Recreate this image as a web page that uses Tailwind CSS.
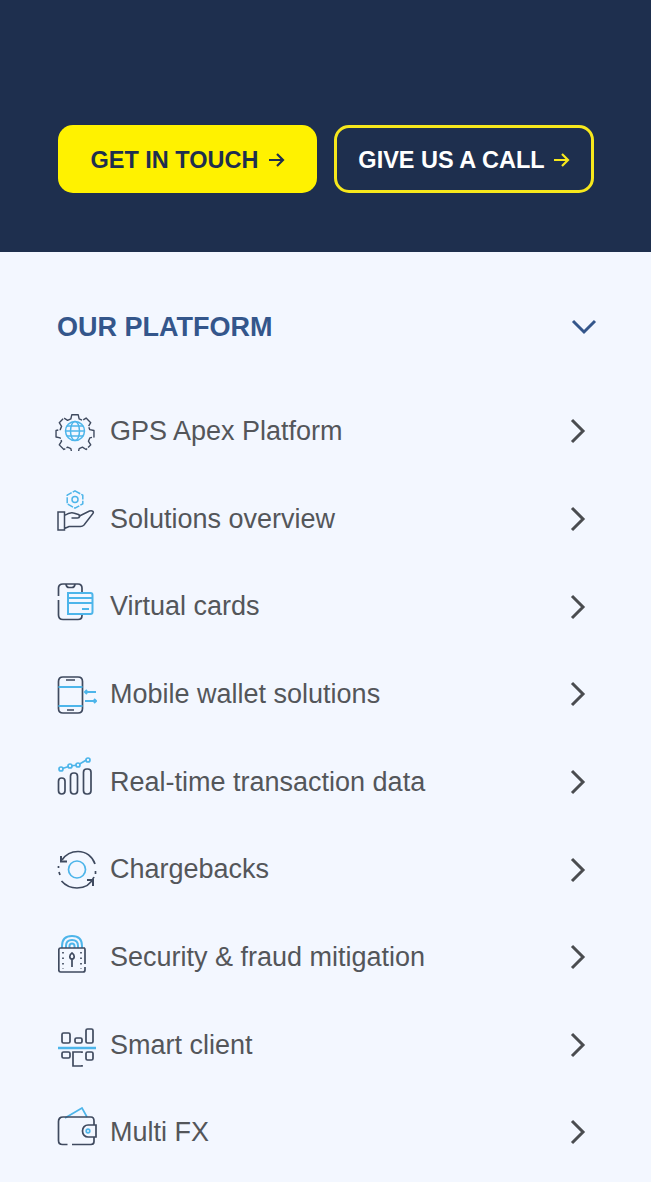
<!DOCTYPE html>
<html><head><meta charset="utf-8"><script src="https://cdn.jsdelivr.net/npm/@tailwindcss/browser@4"></script></head>
<body class="m-0 bg-[#f3f7ff] font-['Liberation_Sans',Arial,sans-serif] overflow-hidden">
<div class="w-[651px] h-[1182px] overflow-hidden">
<header class="h-[252px] bg-[#1e2f4e] pt-[125px] pl-[58px] flex gap-[17px] items-start">
  <a class="w-[259px] h-[68px] rounded-[15px] bg-[#fff200] flex items-center justify-center gap-[9px] text-[#1e2f4e] text-[23.5px] font-bold"><span class="pt-[4px]">GET IN TOUCH</span>
    <svg class="w-[17px] h-[16px] mt-[2px]" viewBox="0 0 17 16" fill="none" stroke="currentColor" stroke-width="2.2"><path d="M1 8h14M9 2l6 6-6 6"/></svg></a>
  <a class="w-[260px] h-[68px] rounded-[15px] border-[3px] border-[#f7e81c] flex items-center justify-center gap-[8px] text-white text-[23.5px] font-bold"><span class="pt-[4px]">GIVE US A CALL</span>
    <svg class="w-[17px] h-[16px] mt-[2px] text-[#f7e81c]" viewBox="0 0 17 16" fill="none" stroke="currentColor" stroke-width="2.2"><path d="M1 8h14M9 2l6 6-6 6"/></svg></a>
</header>
<main class="pl-[57px] pr-[54px]">
  <div class="h-[150px] pt-[56px] flex justify-between items-start">
    <h2 class="h-[38px] leading-[38px] text-[#34568b] text-[27px] font-bold">OUR PLATFORM</h2>
    <svg class="w-[26px] h-[16px] mt-[11px]" viewBox="0 0 26 16" fill="none" stroke="#34568b" stroke-width="3"><path d="M2 2l11 11L24 2"/></svg>
  </div>
  <ul class="text-[#54565a] text-[27px] -mt-[14.5px]">
    <li class="h-[87.65px] flex items-center">
      <svg class="w-[40px] h-[40px] shrink-0 -ml-[2px] mr-[15px]" viewBox="0 0 40 40" fill="none" stroke-width="1.5"><path stroke="#3f4a5f" stroke-dasharray="15 1.500" d="M16.500 2.500h7l1 4.500 3.500 1.500 4-2.500 5 5-2.500 4 1.500 3.500 4.500 1v7l-4.500 1-1.500 3.500 2.500 4-5 5-4-2.500-3.500 1.500-1 4.500h-7l-1-4.500-3.500-1.500-4 2.500-5-5 2.500-4-1.500-3.500-4.500-1v-7l4.500-1 1.500-3.500-2.500-4 5-5 4 2.500 3.500-1.500z" stroke-linejoin="round" transform="translate(1.500 1.500) scale(.925)"/><circle cx="20" cy="20" r="9.500" stroke="#4db5ea"/><ellipse cx="20" cy="20" rx="4.500" ry="9.500" stroke="#4db5ea"/><path stroke="#4db5ea" d="M10 20h20M11.500 15h17M11.500 25h17"/></svg>
      <span class="grow">GPS Apex Platform</span>
      <svg class="w-[16px] h-[26px] mr-[11px]" viewBox="0 0 16 26" fill="none" stroke="#4a4c50" stroke-width="3"><path d="M2 2l11 11L2 24"/></svg>
    </li>
    <li class="h-[87.65px] flex items-center">
      <svg class="w-[39px] h-[41px] shrink-0 mr-[14px] -mt-[17px]" viewBox="0 0 39 41" fill="none" stroke-width="1.500"><circle cx="18" cy="9.500" r="3" stroke="#4db5ea"/><path stroke="#4db5ea" stroke-dasharray="6 1.200" stroke-linejoin="round" d="M18 .8l7.800 4.400v8.600L18 18.200l-7.800-4.400V5.200z"/><path stroke="#3f4a5f" d="M1 22h6.500v18H1zM7.500 25.500c3-2 6-3.500 9-2.500l5 1.500c2 .7 1.500 3.500-1 3.500h-6M21.500 26.500l11-5.500c3-1 5 1 3 3L27 35c-1 1-2 1.500-3.500 1.500H12l-4.500 2"/></svg>
      <span class="grow">Solutions overview</span>
      <svg class="w-[16px] h-[26px] mr-[11px]" viewBox="0 0 16 26" fill="none" stroke="#4a4c50" stroke-width="3"><path d="M2 2l11 11L2 24"/></svg>
    </li>
    <li class="h-[87.65px] flex items-center">
      <svg class="w-[38px] h-[38px] shrink-0 mr-[15px] -mt-[9px]" viewBox="0 0 38 38" fill="none" stroke-width="1.700"><path stroke="#3f4a5f" d="M25 10V5c0-2.500-1.500-4-4-4H6C3 1 1.500 2.500 1.500 5v8M1.500 17v15c0 3 1.500 4.500 4.500 4.500h15c2.500 0 4-1.500 4-4v-1.500M9 1.500c.5 2.500 1.500 3 3 3h3c1.500 0 2.500-.5 3-3"/><path stroke="#4db5ea" stroke-width="2" d="M11 10h22.500c1.500 0 2 .7 2 2v17c0 1.500-.7 2-2 2H11zM11 15h24.500M11 20h24.500M25 26h7"/></svg>
      <span class="grow">Virtual cards</span>
      <svg class="w-[16px] h-[26px] mr-[11px]" viewBox="0 0 16 26" fill="none" stroke="#4a4c50" stroke-width="3"><path d="M2 2l11 11L2 24"/></svg>
    </li>
    <li class="h-[87.65px] flex items-center">
      <svg class="w-[40px] h-[38px] shrink-0 mr-[13px] mt-[1px]" viewBox="0 0 40 38" fill="none" stroke-width="1.700"><path stroke="#3f4a5f" d="M6 1h15c3 0 4.500 1.500 4.500 4.500v27c0 3-1.500 4.500-4.500 4.500H6c-3 0-4.500-1.500-4.500-4.500v-27C1.500 2.500 3 1 6 1zM9 4h9M10 34h7"/><path stroke="#4db5ea" stroke-width="2" d="M1.500 11h24M1.500 30h24M28 16h11M30 14l-2 2 2 2M28 25h11M37 23l2 2-2 2"/></svg>
      <span class="grow">Mobile wallet solutions</span>
      <svg class="w-[16px] h-[26px] mr-[11px]" viewBox="0 0 16 26" fill="none" stroke="#4a4c50" stroke-width="3"><path d="M2 2l11 11L2 24"/></svg>
    </li>
    <li class="h-[87.65px] flex items-center">
      <svg class="w-[36px] h-[38px] shrink-0 mr-[17px] -mt-[11px]" viewBox="0 0 36 38" fill="none" stroke-width="1.700"><path stroke="#4db5ea" d="M4 12l9-3 8-1 10-6"/><circle cx="4" cy="12" r="2" stroke="#4db5ea" fill="#f3f7ff"/><circle cx="13" cy="9" r="2" stroke="#4db5ea" fill="#f3f7ff"/><circle cx="21" cy="8" r="2" stroke="#4db5ea" fill="#f3f7ff"/><circle cx="31" cy="3" r="2" stroke="#4db5ea" fill="#f3f7ff"/><rect x="1.500" y="21" width="6.500" height="16" rx="3.200" stroke="#3f4a5f"/><rect x="13.500" y="16" width="7" height="21" rx="3.200" stroke="#3f4a5f"/><rect x="26.500" y="12" width="7.500" height="25" rx="3.200" stroke="#3f4a5f"/></svg>
      <span class="grow">Real-time transaction data</span>
      <svg class="w-[16px] h-[26px] mr-[11px]" viewBox="0 0 16 26" fill="none" stroke="#4a4c50" stroke-width="3"><path d="M2 2l11 11L2 24"/></svg>
    </li>
    <li class="h-[87.65px] flex items-center">
      <svg class="w-[40px] h-[40px] shrink-0 mr-[13px]" viewBox="0 0 40 40" fill="none" stroke-width="1.700"><circle cx="20" cy="19.500" r="8.500" stroke="#4db5ea"/><path stroke="#3f4a5f" d="M5 10C9 4 15 1.500 21 1.500c8 0 14.500 5 17 12.500M38.500 21v3M37 27c-3 7-9 11-17 11-6 0-12-3-15.500-7M3 25l-1-3M1.500 18v-2"/><path stroke="#3f4a5f" stroke-width="2" d="M4 6v5.500h6M36 36v-6h-6"/></svg>
      <span class="grow">Chargebacks</span>
      <svg class="w-[16px] h-[26px] mr-[11px]" viewBox="0 0 16 26" fill="none" stroke="#4a4c50" stroke-width="3"><path d="M2 2l11 11L2 24"/></svg>
    </li>
    <li class="h-[87.65px] flex items-center">
      <svg class="w-[30px] h-[38px] shrink-0 ml-[1px] mr-[22px] -mt-[6px]" viewBox="0 0 30 38" fill="none" stroke-width="1.700"><path stroke="#4db5ea" stroke-width="2" d="M4 13v-2C4 4 8 1 14 1s10 3 10 10v2M8 13v-2c0-4 2.500-6 6-6s6 2 6 6v2M11.500 13v-2c0-2 1-2.500 2.500-2.500s2.500.5 2.500 2.500v2"/><path stroke="#3f4a5f" d="M27 13H2.500C1.300 13 .8 13.700.8 15v20c0 1.300.5 2 1.700 2H25c1.500 0 2-.7 2-2v-3M27 29V15c0-1.300 0-2-1-2"/><path stroke="#3f4a5f" d="M14 18c-1.500 1-2.200 2.500-2.200 3.500 0 1.500 1 2.500 2.200 2.500s2.200-1 2.200-2.500c0-1-.7-2.500-2.200-3.500zM14 24v8"/><path stroke="#3f4a5f" stroke-dasharray="1.500 4" d="M5 17v17M23 17v17"/></svg>
      <span class="grow">Security &amp; fraud mitigation</span>
      <svg class="w-[16px] h-[26px] mr-[11px]" viewBox="0 0 16 26" fill="none" stroke="#4a4c50" stroke-width="3"><path d="M2 2l11 11L2 24"/></svg>
    </li>
    <li class="h-[87.65px] flex items-center">
      <svg class="w-[39px] h-[39px] shrink-0 mr-[14px] mt-[6px]" viewBox="0 0 39 39" fill="none" stroke-width="1.700"><path stroke="#4db5ea" stroke-width="2.500" d="M1 20h38"/><g stroke="#3f4a5f"><rect x="5" y="5" width="8" height="10" rx="1.500"/><rect x="18" y="10" width="7" height="5" rx="1.500"/><rect x="29" y="1" width="7" height="14" rx="1.500"/><rect x="5" y="24" width="8" height="6" rx="1.500"/><path d="M25 25v-1h-9v14h9v-1"/><rect x="29" y="24" width="7" height="8" rx="1.500"/></g></svg>
      <span class="grow">Smart client</span>
      <svg class="w-[16px] h-[26px] mr-[11px]" viewBox="0 0 16 26" fill="none" stroke="#4a4c50" stroke-width="3"><path d="M2 2l11 11L2 24"/></svg>
    </li>
    <li class="h-[87.65px] flex items-center">
      <svg class="w-[40px] h-[39px] shrink-0 mr-[13px] -mt-[11px]" viewBox="0 0 40 39" fill="none" stroke-width="1.700"><path stroke="#4db5ea" d="M8 11L25 1l5 9"/><path stroke="#3f4a5f" d="M37 18v-4c0-2-1-4-3-4H6c-3 0-4.500 2-4.500 4.500v19c0 2.500 1.500 4 4 4h5M15 37.500h19c2 0 3-1 3-3V30"/><path stroke="#3f4a5f" d="M39 18H31c-3 0-5.500 2.500-5.500 6s2.500 6 5.500 6h8z"/><circle cx="31" cy="24" r="1.800" stroke="#4db5ea"/></svg>
      <span class="grow">Multi FX</span>
      <svg class="w-[16px] h-[26px] mr-[11px]" viewBox="0 0 16 26" fill="none" stroke="#4a4c50" stroke-width="3"><path d="M2 2l11 11L2 24"/></svg>
    </li>
  </ul>
</main>
</div>
</body></html>
